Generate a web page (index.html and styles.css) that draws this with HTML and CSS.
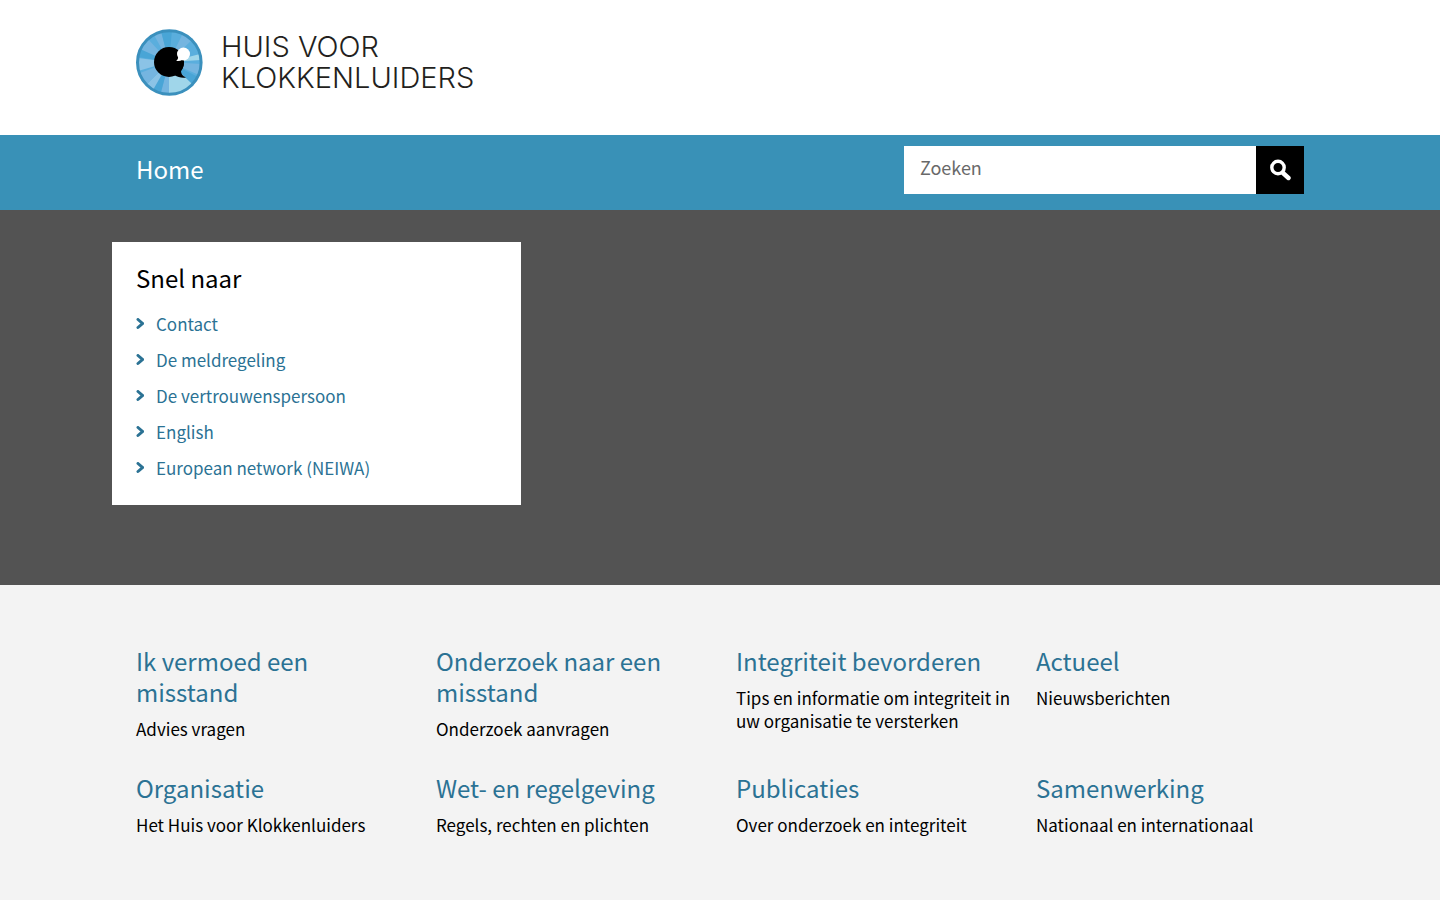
FILE: index.html
```html
<!DOCTYPE html>
<html lang="nl">
<head>
<meta charset="utf-8">
<meta name="viewport" content="width=device-width, initial-scale=1">
<title>Huis voor Klokkenluiders</title>
<link rel="stylesheet" href="styles.css">
</head>
<body>
<header class="masthead">
  <div class="container">
    <a class="logo" href="#">
      <svg class="logo-mark" viewBox="0 0 67 69" aria-hidden="true">
        <circle cx="33.300" cy="34.500" r="32" fill="#5aaedd"/>
        <path fill="#8bc3e6" d="M33 34 2 30 2 43ZM33 34 10 57 19 63ZM33 34 58 57 50 63Z"/>
        <path fill="#75b5e0" d="M33 34 3 22 12 11ZM33 34 4 45 10 57ZM33 34 25 64 33 66ZM33 34 47 5 57 11ZM33 34 65 36 63 47ZM33 34 18 7 25 3Z"/>
        <path fill="#49a5d6" d="M33 34 2 29 4 21ZM33 34 17 62 25 64ZM33 34 25 3 36 2ZM33 34 62 49 57 57Z"/>
        <path fill="#a0d6ea" d="M33 34 33 66 43 65ZM33 34 43 65 57 57ZM33 34 64 26 65 32Z"/>
        <circle cx="33.300" cy="34.500" r="31.800" fill="none" stroke="#3b90bd" stroke-width="3"/>
        <circle cx="33" cy="34" r="15"/>
        <path d="M47.500 30c1 5 .500 9-2.500 13 0 3 1.500 5 5 6.500-4 .500-8 0-11.500-2.500L36 33Z"/>
        <circle cx="47.500" cy="26" r="6.500" fill="#fff"/>
        <path fill="#fff" d="M42 27.500c.500 2.500 0 4-1.800 5.300 2.300.500 4.300.200 6.300-1Z"/>
      </svg>
      <span class="logo-text">HUIS VOOR<br>KLOKKENLUIDERS</span>
    </a>
  </div>
</header>
<div class="bar">
  <div class="container bar-inner">
    <nav class="main-nav"><a class="home" href="#">Home</a></nav>
    <form class="search" role="search">
      <input class="search-input" type="text" placeholder="Zoeken" aria-label="Zoeken">
      <button class="search-button" type="submit" aria-label="Zoek">
        <svg class="search-icon" viewBox="0 0 22 22" aria-hidden="true"><g fill="none" stroke="#fff"><circle cx="9" cy="8.500" r="6.200" stroke-width="3.400"/><path d="M14 14 19.500 19" stroke-width="4.400" stroke-linecap="round"/></g></svg>
      </button>
    </form>
  </div>
</div>
<main>
  <section class="hero">
    <div class="quick">
      <h2 class="quick-title">Snel naar</h2>
      <ul class="quick-list">
        <li><a class="quick-link" href="#"><svg class="chevron" viewBox="0 0 8 12" aria-hidden="true"><path d="M2 1.500 6.500 5.500 2 9.500"/></svg>Contact</a></li>
        <li><a class="quick-link" href="#"><svg class="chevron" viewBox="0 0 8 12" aria-hidden="true"><path d="M2 1.500 6.500 5.500 2 9.500"/></svg>De meldregeling</a></li>
        <li><a class="quick-link" href="#"><svg class="chevron" viewBox="0 0 8 12" aria-hidden="true"><path d="M2 1.500 6.500 5.500 2 9.500"/></svg>De vertrouwenspersoon</a></li>
        <li><a class="quick-link" href="#"><svg class="chevron" viewBox="0 0 8 12" aria-hidden="true"><path d="M2 1.500 6.500 5.500 2 9.500"/></svg>English</a></li>
        <li><a class="quick-link" href="#"><svg class="chevron" viewBox="0 0 8 12" aria-hidden="true"><path d="M2 1.500 6.500 5.500 2 9.500"/></svg>European network (NEIWA)</a></li>
      </ul>
    </div>
  </section>
  <section class="container topics">
    <div class="topic"><h2 class="topic-title"><a href="#">Ik vermoed een misstand</a></h2><p class="topic-text">Advies vragen</p></div>
    <div class="topic"><h2 class="topic-title"><a href="#">Onderzoek naar een misstand</a></h2><p class="topic-text">Onderzoek aanvragen</p></div>
    <div class="topic"><h2 class="topic-title"><a href="#">Integriteit bevorderen</a></h2><p class="topic-text">Tips en informatie om integriteit in uw organisatie te versterken</p></div>
    <div class="topic"><h2 class="topic-title"><a href="#">Actueel</a></h2><p class="topic-text">Nieuwsberichten</p></div>
    <div class="topic"><h2 class="topic-title"><a href="#">Organisatie</a></h2><p class="topic-text">Het Huis voor Klokkenluiders</p></div>
    <div class="topic"><h2 class="topic-title"><a href="#">Wet- en regelgeving</a></h2><p class="topic-text">Regels, rechten en plichten</p></div>
    <div class="topic"><h2 class="topic-title"><a href="#">Publicaties</a></h2><p class="topic-text">Over onderzoek en integriteit</p></div>
    <div class="topic"><h2 class="topic-title"><a href="#">Samenwerking</a></h2><p class="topic-text">Nationaal en internationaal</p></div>
  </section>
</main>
</body>
</html>
```
FILE: styles.css
```css
* { box-sizing: border-box; }
body {
  margin: 0;
  background: #f3f3f3;
  color: #000;
  font-family: "Noto Sans CJK SC", Lato, sans-serif;
  font-size: 17px;
  line-height: 23px;
}
a { color: #2b7294; text-decoration: none; }
a:hover { text-decoration: underline; }
h2, p, ul { margin: 0; padding: 0; }
h2 { font-weight: 400; font-size: 24px; line-height: 31px; }
.container { max-width: 1216px; margin: 0 auto; padding: 0 24px; }
.masthead { background: #fff; padding: 28px 0 38px; }
.logo { display: inline-flex; align-items: flex-start; gap: 18px; color: #231f20; vertical-align: top; }
.logo-mark { width: 67px; height: 69px; }
.logo-text { padding-top: 3px; font-family: Inter, sans-serif; font-weight: 300; font-size: 29px; line-height: 31px; }
.bar { background: #3991b7; padding: 11px 0 16px; }
.bar-inner { display: flex; justify-content: space-between; align-items: center; }
.main-nav { padding-bottom: 4px; }
.home { color: #fff; font-size: 24px; line-height: 31px; }
.search { display: flex; width: 400px; }
.search-input { flex: 1; min-width: 0; height: 48px; padding: 0 16px 6px; border: 0; border-radius: 0; background: #fff; color: #000; font: inherit; font-size: 18px; }
.search-input::placeholder { color: #696969; opacity: 1; }
.search-button { width: 48px; height: 48px; padding: 0; border: 0; background: #000; display: flex; align-items: center; justify-content: center; }
.search-icon { width: 22px; height: 22px; }
.hero { background: #535353; padding: 32px 24px 80px; padding-left: max(24px, calc((100% - 1216px) / 2)); }
.quick { width: 409px; max-width: 100%; padding: 20px 24px 19px; background: #fff; }
.quick-title { margin-bottom: 13px; }
.quick-list { list-style: none; }
.quick-link { display: flex; align-items: center; gap: 12px; line-height: 36px; }
.chevron { width: 8px; height: 12px; fill: none; stroke: #2b7294; stroke-width: 3; stroke-linecap: round; }
.topics { display: grid; grid-template-columns: repeat(4, 1fr); column-gap: 24px; row-gap: 32px; padding-top: 60px; padding-right: 16px; padding-bottom: 56px; }
.topic-text { margin-top: 10px; }
```
